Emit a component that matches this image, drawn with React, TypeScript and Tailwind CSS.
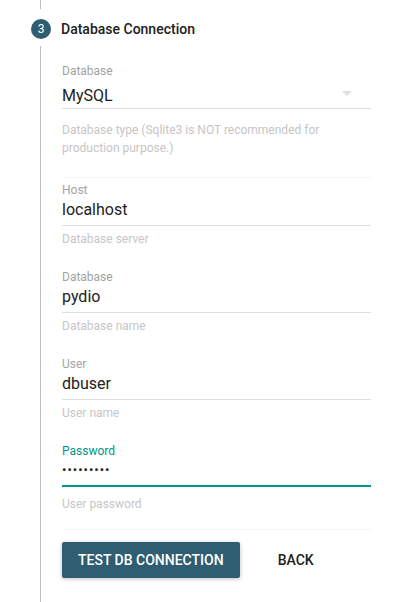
import React from 'react';

type FieldProps = {
  label: string;
  value: string;
  helper: string;
  focused?: boolean;
};

const TextField = ({ label, value, helper, focused }: FieldProps) => {
  return (
    <div className="flex flex-col mb-[21px]">
      <div className={`text-[12px] leading-[16px] ${focused ? 'text-[#009688]' : 'text-[#a3a3a3]'}`}>{label}</div>
      <div
        className={`text-[16px] leading-[24px] text-[#222222] ${
          focused ? 'border-b-2 border-[#009688] h-[28px]' : 'border-b border-[#e0e0e0] h-[28px]'
        }`}
      >
        {focused ? <span className="text-[13px] tracking-[1px] relative top-[-2px]">•••••••••</span> : value}
      </div>
      <div className={`text-[12px] leading-[18px] text-[#c6c6c6] ${focused ? 'mt-[8px]' : 'mt-[4px]'}`}>{helper}</div>
    </div>
  );
};

export default function App() {
  return (
    <div className="w-[400px] h-[602px] bg-white overflow-hidden" style={{ fontFamily: 'Roboto, "Liberation Sans", sans-serif' }}>
      <div className="ml-[40px] h-[9px] border-l border-[#bdbdbd]" />
      <div className="flex items-center h-[20px] mt-[10px] ml-[31px]">
        <div className="w-[20px] h-[20px] rounded-full bg-[#2f5d72] text-white text-[12px] flex items-center justify-center">3</div>
        <div className="ml-[10px] text-[14px] font-medium text-[#212121]">Database Connection</div>
      </div>
      <div className="ml-[40px] mt-[7px] border-l border-[#bdbdbd] pl-[21px] pr-[29px] pt-[17px] h-[600px]">
        {/* select */}
        <div className="flex flex-col">
          <div className="text-[12px] leading-[16px] text-[#a3a3a3]">Database</div>
          <div className="flex items-center justify-between h-[30px] pt-[5px] border-b border-[#e0e0e0]">
            <span className="text-[16px] leading-[24px] text-[#222222]">MySQL</span>
            <svg width="10" height="5" viewBox="0 0 10 5" className="mr-[19px] mb-[6px]">
              <path d="M0 0 L10 0 L5 5 Z" fill="#e0e0e0" />
            </svg>
          </div>
          <div className="mt-[12px] text-[12px] leading-[18px] text-[#c6c6c6]">
            Database type (Sqlite3 is NOT recommended for production purpose.)
          </div>
        </div>
        <div className="mt-[20px] mb-[4px] border-t border-[#f5f5f5]" />
        <TextField label="Host" value="localhost" helper="Database server" />
        <TextField label="Database" value="pydio" helper="Database name" />
        <TextField label="User" value="dbuser" helper="User name" />
        <TextField label="Password" value="" helper="User password" focused />
        <div className="-mt-[5px] border-t border-[#f5f5f5]" />
        <div className="flex items-center mt-[12px]">
          <button className="h-[36px] px-[16px] rounded-[2px] bg-[#2f5d72] text-white text-[14px] font-medium uppercase shadow-[0_1px_4px_rgba(0,0,0,0.25)]">
            Test DB Connection
          </button>
          <button className="h-[36px] ml-[22px] px-[16px] text-[#212121] text-[14px] font-medium uppercase">Back</button>
        </div>
      </div>
    </div>
  );
}
